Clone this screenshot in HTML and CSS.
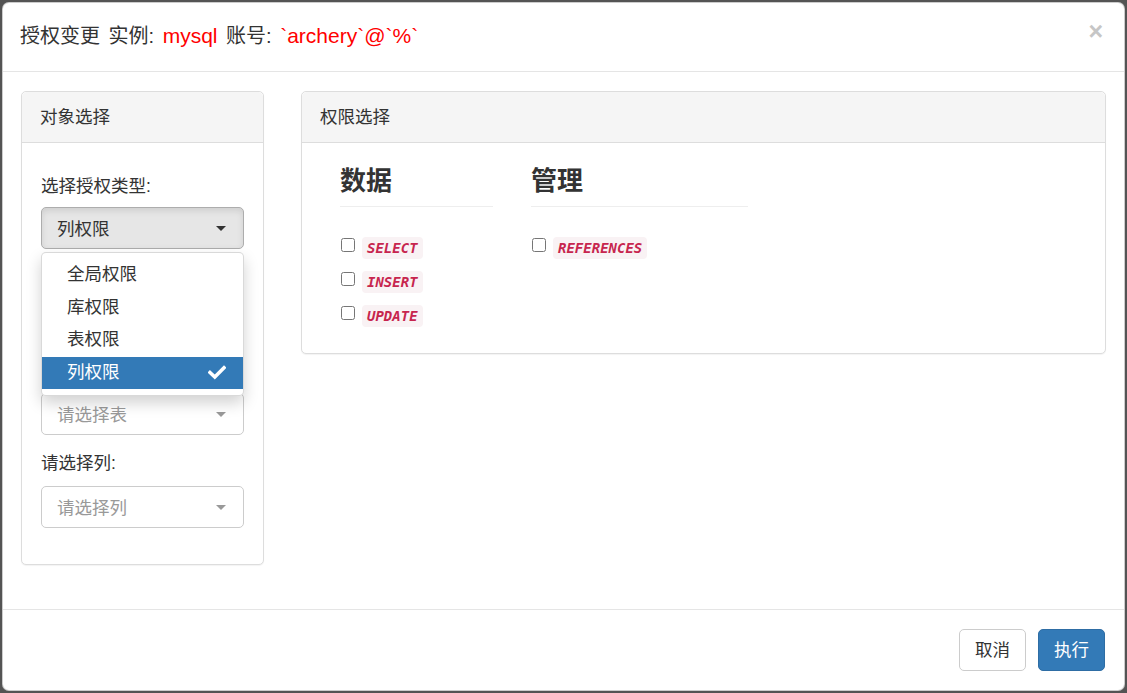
FILE: index.html
```html
<!DOCTYPE html>
<html lang="zh-CN">
<head>
<meta charset="utf-8">
<title>授权变更</title>
<link rel="stylesheet" href="styles.css">
</head>
<body>
<div class="modal">
  <div class="modal-header">
    <h4 class="modal-title">授权变更 实例: <span class="hl">mysql</span> 账号: <span class="hl">`archery`@`%`</span></h4>
    <button class="close" type="button">×</button>
  </div>
  <div class="modal-body">
    <div class="panel panel-left">
      <div class="panel-heading">对象选择</div>
      <div class="panel-body form-body">
        <div class="form-group">
          <label class="label">选择授权类型:</label>
          <div class="select-wrap">
            <button class="select open" type="button"><span>列权限</span><span class="caret"></span></button>
            <ul class="dropdown">
              <li class="item">全局权限</li>
              <li class="item">库权限</li>
              <li class="item">表权限</li>
              <li class="item active"><span>列权限</span>
                <svg class="check" width="18" height="15" viewBox="0 0 18 15"><path d="M2 7.5 L6.8 12 L16 2.8" fill="none" stroke="#fff" stroke-width="3.6" stroke-linecap="square" stroke-linejoin="miter"/></svg>
              </li>
            </ul>
          </div>
        </div>
        <div class="form-group">
          <label class="label">请选择库:</label>
          <button class="select placeholder" type="button"><span>请选择库</span><span class="caret"></span></button>
        </div>
        <div class="form-group">
          <label class="label">请选择表:</label>
          <button class="select placeholder" type="button"><span>请选择表</span><span class="caret"></span></button>
        </div>
        <div class="form-group">
          <label class="label">请选择列:</label>
          <button class="select placeholder" type="button"><span>请选择列</span><span class="caret"></span></button>
        </div>
      </div>
    </div>
    <div class="panel panel-right">
      <div class="panel-heading">权限选择</div>
      <div class="panel-body perm-body">
        <div class="perm-col col-data">
          <h3 class="perm-title">数据</h3>
          <div class="perm-row"><input type="checkbox" class="cb"><code class="code">SELECT</code></div>
          <div class="perm-row"><input type="checkbox" class="cb"><code class="code">INSERT</code></div>
          <div class="perm-row"><input type="checkbox" class="cb"><code class="code">UPDATE</code></div>
        </div>
        <div class="perm-col col-admin">
          <h3 class="perm-title">管理</h3>
          <div class="perm-row"><input type="checkbox" class="cb"><code class="code">REFERENCES</code></div>
        </div>
      </div>
    </div>
  </div>
  <div class="modal-footer">
    <button class="btn btn-default" type="button">取消</button>
    <button class="btn btn-primary" type="button">执行</button>
  </div>
</div>
</body>
</html>
```

FILE: styles.css
```css
* { box-sizing: border-box; }
html, body { height: 100%; }
body {
  margin: 0;
  padding: 2px;
  background: #545454;
  font-family: "Liberation Sans", "Noto Sans CJK SC", sans-serif;
  font-size: 17.5px;
  color: #333;
}
.modal {
  width: 1123px;
  height: 689px;
  background: #fff;
  border: 1px solid rgba(0,0,0,.2);
  border-radius: 7px;
  display: flex;
  flex-direction: column;
}
.modal-header {
  display: flex;
  align-items: center;
  justify-content: space-between;
  padding: 18px 19px 20px 17px;
  border-bottom: 1px solid #e5e5e5;
  height: 69px;
}
.modal-title {
  margin: 0;
  font-size: 20px;
  font-weight: normal;
  line-height: 30px;
  color: #333;
  word-spacing: 3px;
}
.hl { color: #f00; font-size: 21px; }
.close {
  border: 0;
  background: transparent;
  padding: 0;
  margin: -10px 2px 0 0;
  font-family: "Liberation Sans", sans-serif;
  font-weight: bold;
  font-size: 25px;
  line-height: 26px;
  color: #c6c6c6;
}
.modal-body {
  flex: 1;
  display: flex;
  align-items: flex-start;
  gap: 37px;
  padding: 19px 18px 0 18px;
}
.panel {
  border: 1px solid #ddd;
  border-radius: 5px;
  background: #fff;
  box-shadow: 0 1px 1px rgba(0,0,0,.05);
}
.panel-left { width: 243px; }
.panel-right { flex: 1; }
.panel-heading {
  height: 51px;
  padding: 0 18px;
  display: flex;
  align-items: center;
  background: #f5f5f5;
  border-bottom: 1px solid #ddd;
  border-radius: 5px 5px 0 0;
  line-height: 25px;
}
.form-body { padding: 29px 19px 36px 19px; }
.form-group { margin-bottom: 16px; }
.form-group:last-child { margin-bottom: 0; }
.label {
  display: block;
  line-height: 25px;
  height: 25px;
  margin-bottom: 10px;
}
.form-group:first-child .label { padding-top: 2px; }
.select-wrap { position: relative; }
.select {
  width: 100%;
  height: 42px;
  display: flex;
  align-items: center;
  justify-content: space-between;
  padding: 0 17px 2px 15px;
  font-family: inherit;
  font-size: 17.5px;
  border-radius: 5px;
  border: 1px solid #ccc;
  background: #fff;
  color: #999;
  text-align: left;
}
.select.open {
  background: #e6e6e6;
  border-color: #adadad;
  color: #333;
  box-shadow: inset 0 3px 6px rgba(0,0,0,.1);
}
.caret {
  width: 0;
  height: 0;
  margin-top: 2px;
  border-top: 5px solid #999;
  border-left: 5px solid transparent;
  border-right: 5px solid transparent;
}
.open .caret { border-top-color: #333; }
.dropdown {
  position: absolute;
  left: 0;
  right: 0;
  top: 45px;
  z-index: 10;
  margin: 0;
  padding: 6px 0;
  list-style: none;
  background: #fff;
  border: 1px solid rgba(0,0,0,.15);
  border-radius: 5px;
  box-shadow: 0 7px 15px rgba(0,0,0,.18);
}
.item {
  height: 32.5px;
  line-height: 30.5px;
  padding: 0 17px 2px 25px;
  display: flex;
  align-items: center;
  justify-content: space-between;
  color: #333;
}
.item.active { background: #337ab7; color: #fff; }
.check { display: block; margin-top: 2px; }
.perm-body {
  display: flex;
  padding: 0 19px 20px 19px;
}
.perm-col { padding: 0 19px; }
.col-data { width: 191px; }
.col-admin { width: 255px; }
.perm-title {
  margin: 24px 0 24px 0;
  padding-bottom: 10px;
  border-bottom: 1px solid #eee;
  font-size: 26px;
  line-height: 29px;
  font-weight: bold;
  color: #333;
}
.perm-row {
  height: 34px;
  display: flex;
  align-items: flex-start;
}
.cb {
  width: 14px;
  height: 14px;
  margin: 7px 7px 0 1px;
}
.code {
  margin-top: 6px;
  height: 22px;
  line-height: 22px;
  padding: 0 5px;
  border-radius: 4px;
  background: #f9f2f4;
  color: #c7254e;
  font-family: "DejaVu Sans Mono", "Liberation Mono", monospace;
  font-size: 14px;
  font-weight: bold;
  font-style: italic;
}
.modal-footer {
  height: 81px;
  border-top: 1px solid #e5e5e5;
  display: flex;
  justify-content: flex-end;
  align-items: flex-start;
  gap: 12px;
  padding: 19px 19px 0 0;
}
.btn {
  height: 42px;
  padding: 0 15px;
  border-radius: 5px;
  font-family: inherit;
  font-size: 17.5px;
  line-height: 25px;
  border: 1px solid #ccc;
}
.btn-default { background: #fff; color: #333; }
.btn-primary { background: #337ab7; border-color: #2e6da4; color: #fff; }
```
